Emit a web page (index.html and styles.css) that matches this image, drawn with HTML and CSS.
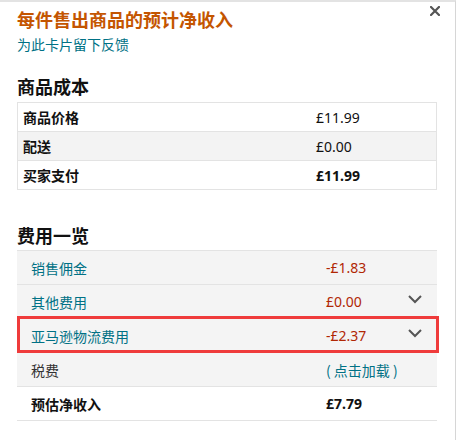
FILE: index.html
```html
<!DOCTYPE html>
<html lang="zh-CN">
<head>
<meta charset="utf-8">
<title>每件售出商品的预计净收入</title>
<link rel="stylesheet" href="styles.css">
</head>
<body>
<div class="panel">
  <button class="close" aria-label="关闭">
    <svg width="10" height="10" viewBox="0 0 10 10"><path d="M1 1 L9 9 M9 1 L1 9" stroke="#555" stroke-width="2.2" stroke-linecap="square" fill="none"/></svg>
  </button>
  <h1 class="title">每件售出商品的预计净收入</h1>
  <a class="feedback" href="#">为此卡片留下反馈</a>

  <h2 class="section cost-head">商品成本</h2>
  <div class="cost">
    <div class="cost-row"><span class="cost-label">商品价格</span><span class="cost-val">£11.99</span></div>
    <div class="cost-row alt"><span class="cost-label">配送</span><span class="cost-val">£0.00</span></div>
    <div class="cost-row"><span class="cost-label">买家支付</span><span class="cost-val strong">£11.99</span></div>
  </div>

  <h2 class="section fee-head">费用一览</h2>
  <div class="fees">
    <div class="fee-row"><span class="fee-label link">销售佣金</span><span class="fee-val neg">-£1.83</span><span></span></div>
    <div class="fee-row"><span class="fee-label link">其他费用</span><span class="fee-val neg">£0.00</span><span class="chev"><svg width="14" height="9" viewBox="0 0 14 9"><path d="M1 1 L7 7 L13 1" stroke="#555" stroke-width="2" fill="none"/></svg></span></div>
    <div class="fee-row marked"><span class="fee-label link">亚马逊物流费用</span><span class="fee-val neg">-£2.37</span><span class="chev"><svg width="14" height="9" viewBox="0 0 14 9"><path d="M1 1 L7 7 L13 1" stroke="#555" stroke-width="2" fill="none"/></svg></span></div>
    <div class="fee-row"><span class="fee-label">税费</span><span class="fee-val link">( 点击加载 )</span><span></span></div>
    <div class="fee-row total"><span class="fee-label strong">预估净收入</span><span class="fee-val strong">£7.79</span><span></span></div>
  </div>
</div>
</body>
</html>
```

FILE: styles.css
```css
* { box-sizing: border-box; }
html, body { margin: 0; padding: 0; background: #fff; }
body {
  font-family: "Noto Sans", "Noto Sans CJK SC", sans-serif;
  color: #111;
}
.panel {
  position: relative;
  width: 456px;
  height: 440px;
  border-top: 2px solid #e3e3e3;
  border-right: 1px solid #d6d6d6;
  padding: 5px 18px 0 17px;
}
.close {
  position: absolute;
  top: 3px;
  right: 14px;
  width: 12px;
  height: 12px;
  padding: 1px;
  border: 0;
  background: none;
  display: flex;
}
.title {
  margin: 0;
  font-family: "Noto Sans CJK SC", sans-serif;
  font-size: 18px;
  line-height: 24px;
  font-weight: 700;
  color: #c45500;
}
.feedback {
  display: block;
  margin-top: 3px;
  font-family: "Noto Sans CJK SC", sans-serif;
  font-size: 14px;
  line-height: 20px;
  color: #007185;
  text-decoration: none;
}
.section {
  margin: 0;
  font-family: "Noto Sans CJK SC", sans-serif;
  font-size: 18px;
  line-height: 24px;
  font-weight: 700;
  color: #111;
}
.cost-head { margin-top: 20px; }
.cost {
  margin-top: 4px;
  border: 1px solid #e3e3e3;
}
.cost-row {
  display: grid;
  grid-template-columns: 293px 1fr;
  align-items: center;
  height: 29px;
  padding-left: 5px;
  border-top: 1px solid #e3e3e3;
  font-size: 14px;
}
.cost-row:first-child { height: 28px; border-top: 0; }
.cost-row.alt { background: #f3f3f3; }
.cost-label {
  font-family: "Noto Sans CJK SC", sans-serif;
  font-weight: 700;
}
.cost-val { color: #111; }
.strong { font-weight: 700; color: #111; }

.fee-head { margin-top: 33px; }
.fees {
  margin-top: 3px;
  border-top: 1px solid #e3e3e3;
}
.fee-row {
  position: relative;
  display: grid;
  grid-template-columns: 295px 1fr 14px;
  align-items: center;
  height: 34px;
  padding: 0 15px 0 14px;
  border-bottom: 1px solid #e3e3e3;
  background: #f4f4f4;
  font-size: 14px;
  color: #333;
}
.fee-row.total { background: #fff; }
.fee-label { font-family: "Noto Sans CJK SC", sans-serif; }
.fee-label.strong { color: #111; }
.link { color: #007185; }
.fee-val.link { font-family: "Noto Sans CJK SC", sans-serif; }
.neg { color: #b12704; }
.chev { display: flex; align-items: center; height: 9px; margin-top: -4px; }
.marked::after {
  content: "";
  position: absolute;
  top: -3px;
  left: 0;
  right: -2px;
  bottom: -1px;
  border: 3px solid #ef3b3b;
  pointer-events: none;
}
```
